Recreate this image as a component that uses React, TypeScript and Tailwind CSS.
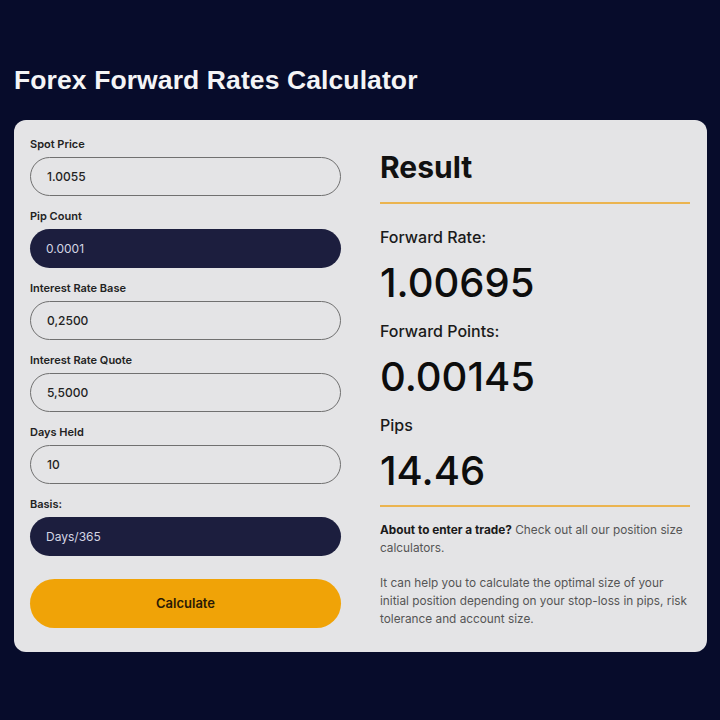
import React from "react";

const fields = [
  { label: "Spot Price", value: "1.0055", dark: false },
  { label: "Pip Count", value: "0.0001", dark: true },
  { label: "Interest Rate Base", value: "0,2500", dark: false },
  { label: "Interest Rate Quote", value: "5,5000", dark: false },
  { label: "Days Held", value: "10", dark: false },
  { label: "Basis:", value: "Days/365", dark: true },
];

const results = [
  { label: "Forward Rate:", value: "1.00695" },
  { label: "Forward Points:", value: "0.00145" },
  { label: "Pips", value: "14.46" },
];

export default function App() {
  return (
    <div
      className="w-[720px] h-[720px] bg-[#070c2b] px-[14px] pt-[64px] overflow-hidden"
      style={{ fontFamily: "Inter, 'Liberation Sans', sans-serif" }}
    >
      <h1
        className="text-[#f4f4f6] text-[26.5px] leading-[32px] font-bold tracking-[0.1px]"
        style={{ fontFamily: "'Liberation Sans', Arial, sans-serif" }}
      >
        Forex Forward Rates Calculator
      </h1>
      <div className="mt-[24px] w-[693px] bg-[#e4e4e6] rounded-[12px] pt-[17px] pb-[24px] pl-[16px] pr-[17px] grid grid-cols-[311px_310px] gap-x-[39px]">
        <div className="flex flex-col">
          {fields.map((f, i) => (
            <div key={i} className={i > 0 ? "mt-[13px]" : ""}>
              <div className="text-[11px] leading-[14px] font-semibold text-[#222]">{f.label}</div>
              <div
                className={`mt-[6px] h-[39px] rounded-full flex items-center pl-[16px] text-[12px] ${
                  f.dark
                    ? "bg-[#1c1e3e] text-[#d4d6e4]"
                    : "border-[1.5px] border-[#707070] text-[#222] font-medium"
                }`}
              >
                {f.value}
              </div>
            </div>
          ))}
          <button className="mt-[23px] h-[49px] rounded-full bg-[#f0a307] text-[#2a1a05] text-[13px] font-semibold">
            Calculate
          </button>
        </div>
        <div className="flex flex-col">
          <div className="mt-[12px] text-[30px] leading-[36px] font-bold text-[#111]">Result</div>
          <div className="mt-[17px] h-[2px] bg-[#ebb450]" />
          <div className="mt-[23px]">
            {results.map((r, i) => (
              <div key={i} className={i > 0 ? "mt-[14px]" : ""}>
                <div className="text-[16px] leading-[20px] font-medium text-[#1a1a1a]">{r.label}</div>
                <div className="mt-[12px] text-[40px] leading-[48px] font-medium text-[#0d0d0d]">{r.value}</div>
              </div>
            ))}
          </div>
          <div className="mt-[10px] h-[2px] bg-[#ebb450]" />
          <p className="mt-[14px] text-[11.8px] leading-[18px] text-[#555]">
            <span className="font-bold text-[#1a1a1a]">About to enter a trade?</span> Check out all our position size
            calculators.
          </p>
          <p className="mt-[17px] text-[11.8px] leading-[18px] text-[#555]">
            It can help you to calculate the optimal size of your initial position depending on your stop-loss in pips,
            risk tolerance and account size.
          </p>
        </div>
      </div>
    </div>
  );
}
